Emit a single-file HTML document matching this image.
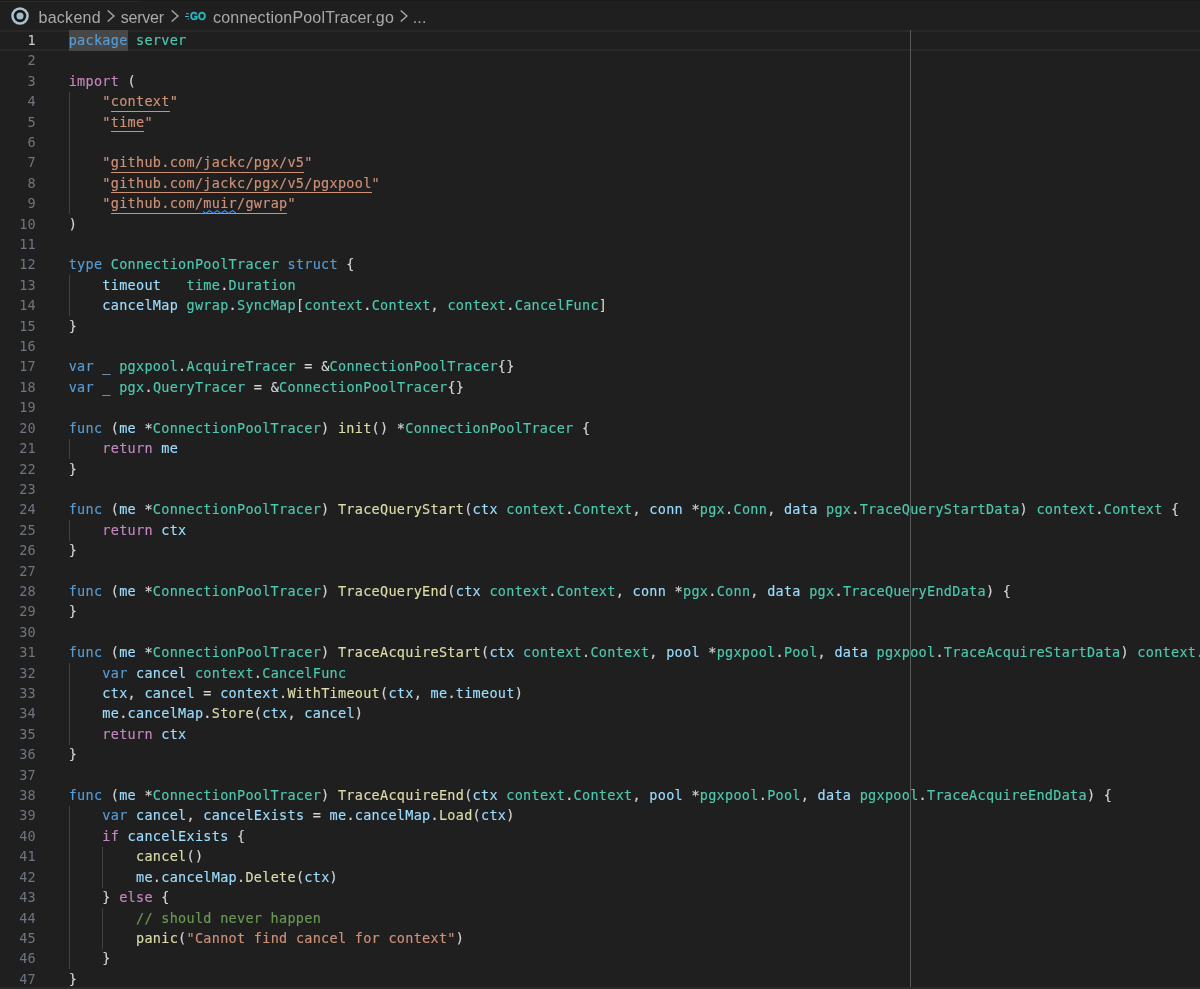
<!DOCTYPE html>
<html lang="en"><head><meta charset="utf-8"><title>connectionPoolTracer.go</title>
<style>
html,body{margin:0;padding:0;background:#1f1f1f;}
body{width:1200px;height:989px;overflow:hidden;position:relative;font-family:"Liberation Sans",sans-serif;}
#ed{will-change:transform;position:absolute;left:0;top:0;width:1200px;height:989px;overflow:hidden;background:#1f1f1f;}
.ln,.cl{position:absolute;white-space:pre;font-family:"DejaVu Sans Mono", "Liberation Mono", monospace;font-size:13.5px;letter-spacing:0.286px;height:20.417px;line-height:20.417px;}
.ln{left:0;width:36px;text-align:right;color:#6e7681;}
.ln.a{color:#cccccc;}
.cl{left:68.7px;color:#d4d4d4;-webkit-text-stroke:0.15px currentColor;}
.k{color:#569cd6}.c{color:#c586c0}.t{color:#4ec9b0}.f{color:#dcdcaa}.v{color:#9cdcfe}.s{color:#ce9178}.m{color:#6a9955}
.g{position:absolute;width:1px;background:#424242;}
.bc{position:absolute;top:0;height:30px;line-height:35px;font-size:16px;letter-spacing:0.1px;color:#a9a9a9;white-space:pre;}
</style></head><body><div id="ed">

<div style="position:absolute;left:0;top:0;width:1200px;height:1.3px;background:#1a1a1a"></div>
<div style="position:absolute;left:0;top:1.3px;width:141px;height:1px;background:#2b2b2b"></div>
<div style="position:absolute;left:0;top:986.8px;width:1200px;height:3px;background:#2b2b2b"></div>
<div style="position:absolute;left:0;top:30px;width:1200px;height:2px;background:#282828"></div>
<div style="position:absolute;left:0;top:49px;width:1200px;height:2px;background:#282828"></div>
<div style="position:absolute;left:68.70px;top:30.30px;width:58.90px;height:20.42px;background:#474747"></div>
<div style="position:absolute;left:910px;top:30px;width:1.2px;height:957px;background:#5a5a5a"></div>
<div class="g" style="left:68.6px;top:91.55px;height:122.50px"></div>
<div class="g" style="left:68.6px;top:275.30px;height:40.83px"></div>
<div class="g" style="left:68.6px;top:438.64px;height:20.42px"></div>
<div class="g" style="left:68.6px;top:520.31px;height:20.42px"></div>
<div class="g" style="left:68.6px;top:663.23px;height:81.67px"></div>
<div class="g" style="left:68.6px;top:806.15px;height:163.34px"></div>
<div class="g" style="left:102.3px;top:846.98px;height:40.83px"></div>
<div class="g" style="left:102.3px;top:908.23px;height:40.83px"></div>
<div class="ln a" style="top:29.900px">1</div>
<div class="cl" style="top:29.900px"><span class="k">package</span><span class="t"> server</span></div>
<div class="ln" style="top:50.310px">2</div>
<div class="ln" style="top:70.720px">3</div>
<div class="cl" style="top:70.720px"><span class="c">import</span> (</div>
<div class="ln" style="top:91.130px">4</div>
<div style="position:absolute;left:110.77px;top:110.72px;width:58.90px;height:1px;background:#ce9178"></div>
<div class="cl" style="top:91.130px">    <span class="s">"</span><span class="s">context</span><span class="s">"</span></div>
<div class="ln" style="top:111.540px">5</div>
<div style="position:absolute;left:110.77px;top:131.13px;width:33.66px;height:1px;background:#ce9178"></div>
<div class="cl" style="top:111.540px">    <span class="s">"</span><span class="s">time</span><span class="s">"</span></div>
<div class="ln" style="top:131.950px">6</div>
<div class="ln" style="top:152.360px">7</div>
<div style="position:absolute;left:110.77px;top:171.97px;width:193.52px;height:1px;background:#ce9178"></div>
<div class="cl" style="top:152.360px">    <span class="s">"</span><span class="s">github.com/jackc/pgx/v5</span><span class="s">"</span></div>
<div class="ln" style="top:172.770px">8</div>
<div style="position:absolute;left:110.77px;top:192.39px;width:260.83px;height:1px;background:#ce9178"></div>
<div class="cl" style="top:172.770px">    <span class="s">"</span><span class="s">github.com/jackc/pgx/v5/pgxpool</span><span class="s">"</span></div>
<div class="ln" style="top:193.180px">9</div>
<div style="position:absolute;left:110.77px;top:212.80px;width:176.69px;height:1px;background:#ce9178"></div>
<div class="cl" style="top:193.180px">    <span class="s">"</span><span class="s">github.com/muir/gwrap</span><span class="s">"</span></div>
<div class="ln" style="top:213.590px">10</div>
<div class="cl" style="top:213.590px">)</div>
<div class="ln" style="top:234.000px">11</div>
<div class="ln" style="top:254.410px">12</div>
<div class="cl" style="top:254.410px"><span class="k">type</span> <span class="t">ConnectionPoolTracer</span> <span class="k">struct</span> {</div>
<div class="ln" style="top:274.820px">13</div>
<div class="cl" style="top:274.820px">    <span class="v">timeout</span>   <span class="t">time</span>.<span class="t">Duration</span></div>
<div class="ln" style="top:295.230px">14</div>
<div class="cl" style="top:295.230px">    <span class="v">cancelMap</span> <span class="t">gwrap</span>.<span class="t">SyncMap</span>[<span class="t">context</span>.<span class="t">Context</span>, <span class="t">context</span>.<span class="t">CancelFunc</span>]</div>
<div class="ln" style="top:315.640px">15</div>
<div class="cl" style="top:315.640px">}</div>
<div class="ln" style="top:336.050px">16</div>
<div class="ln" style="top:356.460px">17</div>
<div class="cl" style="top:356.460px"><span class="k">var</span> <span class="v">_</span> <span class="t">pgxpool</span>.<span class="t">AcquireTracer</span> = &amp;<span class="t">ConnectionPoolTracer</span>{}</div>
<div class="ln" style="top:376.870px">18</div>
<div class="cl" style="top:376.870px"><span class="k">var</span> <span class="v">_</span> <span class="t">pgx</span>.<span class="t">QueryTracer</span> = &amp;<span class="t">ConnectionPoolTracer</span>{}</div>
<div class="ln" style="top:397.280px">19</div>
<div class="ln" style="top:417.690px">20</div>
<div class="cl" style="top:417.690px"><span class="k">func</span> (<span class="v">me</span> *<span class="t">ConnectionPoolTracer</span>) <span class="f">init</span>() *<span class="t">ConnectionPoolTracer</span> {</div>
<div class="ln" style="top:438.100px">21</div>
<div class="cl" style="top:438.100px">    <span class="c">return</span> <span class="v">me</span></div>
<div class="ln" style="top:458.510px">22</div>
<div class="cl" style="top:458.510px">}</div>
<div class="ln" style="top:478.920px">23</div>
<div class="ln" style="top:499.330px">24</div>
<div class="cl" style="top:499.330px"><span class="k">func</span> (<span class="v">me</span> *<span class="t">ConnectionPoolTracer</span>) <span class="f">TraceQueryStart</span>(<span class="v">ctx</span> <span class="t">context</span>.<span class="t">Context</span>, <span class="v">conn</span> *<span class="t">pgx</span>.<span class="t">Conn</span>, <span class="v">data</span> <span class="t">pgx</span>.<span class="t">TraceQueryStartData</span>) <span class="t">context</span>.<span class="t">Context</span> {</div>
<div class="ln" style="top:519.740px">25</div>
<div class="cl" style="top:519.740px">    <span class="c">return</span> <span class="v">ctx</span></div>
<div class="ln" style="top:540.150px">26</div>
<div class="cl" style="top:540.150px">}</div>
<div class="ln" style="top:560.560px">27</div>
<div class="ln" style="top:580.970px">28</div>
<div class="cl" style="top:580.970px"><span class="k">func</span> (<span class="v">me</span> *<span class="t">ConnectionPoolTracer</span>) <span class="f">TraceQueryEnd</span>(<span class="v">ctx</span> <span class="t">context</span>.<span class="t">Context</span>, <span class="v">conn</span> *<span class="t">pgx</span>.<span class="t">Conn</span>, <span class="v">data</span> <span class="t">pgx</span>.<span class="t">TraceQueryEndData</span>) {</div>
<div class="ln" style="top:601.380px">29</div>
<div class="cl" style="top:601.380px">}</div>
<div class="ln" style="top:621.790px">30</div>
<div class="ln" style="top:642.200px">31</div>
<div class="cl" style="top:642.200px"><span class="k">func</span> (<span class="v">me</span> *<span class="t">ConnectionPoolTracer</span>) <span class="f">TraceAcquireStart</span>(<span class="v">ctx</span> <span class="t">context</span>.<span class="t">Context</span>, <span class="v">pool</span> *<span class="t">pgxpool</span>.<span class="t">Pool</span>, <span class="v">data</span> <span class="t">pgxpool</span>.<span class="t">TraceAcquireStartData</span>) <span class="t">context</span>.<span class="t">Context</span> {</div>
<div class="ln" style="top:662.610px">32</div>
<div class="cl" style="top:662.610px">    <span class="k">var</span> <span class="v">cancel</span> <span class="t">context</span>.<span class="t">CancelFunc</span></div>
<div class="ln" style="top:683.020px">33</div>
<div class="cl" style="top:683.020px">    <span class="v">ctx</span>, <span class="v">cancel</span> = <span class="v">context</span>.<span class="f">WithTimeout</span>(<span class="v">ctx</span>, <span class="v">me</span>.<span class="v">timeout</span>)</div>
<div class="ln" style="top:703.430px">34</div>
<div class="cl" style="top:703.430px">    <span class="v">me</span>.<span class="v">cancelMap</span>.<span class="f">Store</span>(<span class="v">ctx</span>, <span class="v">cancel</span>)</div>
<div class="ln" style="top:723.840px">35</div>
<div class="cl" style="top:723.840px">    <span class="c">return</span> <span class="v">ctx</span></div>
<div class="ln" style="top:744.250px">36</div>
<div class="cl" style="top:744.250px">}</div>
<div class="ln" style="top:764.660px">37</div>
<div class="ln" style="top:785.070px">38</div>
<div class="cl" style="top:785.070px"><span class="k">func</span> (<span class="v">me</span> *<span class="t">ConnectionPoolTracer</span>) <span class="f">TraceAcquireEnd</span>(<span class="v">ctx</span> <span class="t">context</span>.<span class="t">Context</span>, <span class="v">pool</span> *<span class="t">pgxpool</span>.<span class="t">Pool</span>, <span class="v">data</span> <span class="t">pgxpool</span>.<span class="t">TraceAcquireEndData</span>) {</div>
<div class="ln" style="top:805.480px">39</div>
<div class="cl" style="top:805.480px">    <span class="k">var</span> <span class="v">cancel</span>, <span class="v">cancelExists</span> = <span class="v">me</span>.<span class="v">cancelMap</span>.<span class="f">Load</span>(<span class="v">ctx</span>)</div>
<div class="ln" style="top:825.890px">40</div>
<div class="cl" style="top:825.890px">    <span class="c">if</span> <span class="v">cancelExists</span> {</div>
<div class="ln" style="top:846.300px">41</div>
<div class="cl" style="top:846.300px">        <span class="f">cancel</span>()</div>
<div class="ln" style="top:866.710px">42</div>
<div class="cl" style="top:866.710px">        <span class="v">me</span>.<span class="v">cancelMap</span>.<span class="f">Delete</span>(<span class="v">ctx</span>)</div>
<div class="ln" style="top:887.120px">43</div>
<div class="cl" style="top:887.120px">    } <span class="c">else</span> {</div>
<div class="ln" style="top:907.530px">44</div>
<div class="cl" style="top:907.530px">        <span class="m">// should never happen</span></div>
<div class="ln" style="top:927.940px">45</div>
<div class="cl" style="top:927.940px">        <span class="f">panic</span>(<span class="s">"Cannot find cancel for context"</span>)</div>
<div class="ln" style="top:948.350px">46</div>
<div class="cl" style="top:948.350px">    }</div>
<div class="ln" style="top:968.760px">47</div>
<div class="cl" style="top:968.760px">}</div>
<svg style="position:absolute;left:203.3px;top:209.5px" width="33" height="4" viewBox="0 0 33 4"><path d="M-4.96 3.40 L-1.13 0.60 L2.70 3.40 L6.53 0.60 L10.36 3.40 L14.19 0.60 L18.02 3.40 L21.85 0.60 L25.68 3.40 L29.51 0.60 L33.34 3.40 L37.17 0.60" fill="none" stroke="#3794ff" stroke-width="1.1"/></svg>
<svg style="position:absolute;left:10.2px;top:6px" width="20" height="20" viewBox="0 0 20 20"><circle cx="10" cy="10" r="7.5" fill="#0b1b24" stroke="#b3bfc7" stroke-width="2.6"/><circle cx="10" cy="10" r="3.55" fill="#a8b7c0"/></svg>
<div class="bc" style="left:38.5px;letter-spacing:0.27px">backend</div>
<svg style="position:absolute;left:106.7px;top:10px" width="8" height="12" viewBox="0 0 8 12"><path d="M0.7 0.5 L7 6 L0.7 11.5" fill="none" stroke="#a9a9a9" stroke-width="1.4"/></svg>
<div class="bc" style="left:120.8px;letter-spacing:-0.25px">server</div>
<svg style="position:absolute;left:171.3px;top:10px" width="8" height="12" viewBox="0 0 8 12"><path d="M0.7 0.5 L7 6 L0.7 11.5" fill="none" stroke="#a9a9a9" stroke-width="1.4"/></svg>
<svg style="position:absolute;left:185px;top:11px" width="23" height="11" viewBox="0 0 23 11"><defs><linearGradient id="gg" x1="0" y1="0" x2="1" y2="1"><stop offset="0" stop-color="#35b3dc"/><stop offset="1" stop-color="#22c4a8"/></linearGradient></defs><text x="5" y="9.3" font-family="'Liberation Sans',sans-serif" font-weight="bold" font-size="11.6" fill="url(#gg)" stroke="url(#gg)" stroke-width="0.35" textLength="16" lengthAdjust="spacingAndGlyphs">GO</text><path d="M1 2.7H3.7M0 5.5H3.7M2.7 8H4" stroke="#4bb9c9" stroke-width="1"/></svg>
<div class="bc" style="left:213px;letter-spacing:0.2px">connectionPoolTracer.go</div>
<svg style="position:absolute;left:400.0px;top:10px" width="8" height="12" viewBox="0 0 8 12"><path d="M0.7 0.5 L7 6 L0.7 11.5" fill="none" stroke="#a9a9a9" stroke-width="1.4"/></svg>
<div class="bc" style="left:412.8px">...</div>
</div></body></html>
